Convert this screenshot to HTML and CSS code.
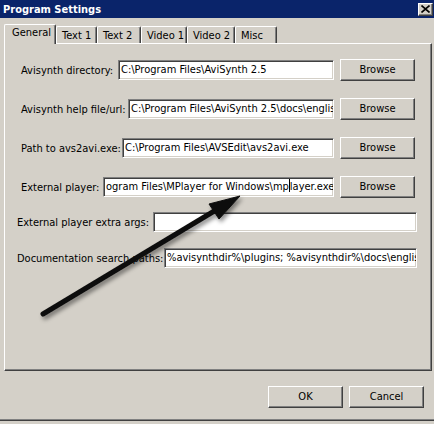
FILE: index.html
```html
<!DOCTYPE html>
<html lang="en">

<head>
    <meta charset="UTF-8">
    <title>Program Settings</title>
    <link rel="stylesheet" href="styles.css">
</head>

<body>
    <div class="window">
        <div class="titlebar">
            <span class="title">Program Settings</span>
            <span class="close">
                <svg width="9" height="8" viewBox="0 0 9 8">
                    <path d="M0.5 0.5 L8.5 7.5 M8.5 0.5 L0.5 7.5" stroke="#000" stroke-width="1.6" />
                </svg>
            </span>
        </div>

        <div class="tabs">
            <div class="tab active tab-general">General</div>
            <div class="tab tab-text1">Text 1</div>
            <div class="tab tab-text2">Text 2</div>
            <div class="tab tab-video1">Video 1</div>
            <div class="tab tab-video2">Video 2</div>
            <div class="tab tab-misc">Misc</div>
        </div>

        <div class="panel">
            <div class="row">
                <span class="label">Avisynth directory:</span>
                <div class="field field-dir">C:\Program Files\AviSynth 2.5</div>
                <div class="btn">Browse</div>
            </div>
            <div class="row">
                <span class="label">Avisynth help file/url:</span>
                <div class="field field-help">C:\Program Files\AviSynth 2.5\docs\english\index.htm</div>
                <div class="btn">Browse</div>
            </div>
            <div class="row">
                <span class="label">Path to avs2avi.exe:</span>
                <div class="field field-avs">C:\Program Files\AVSEdit\avs2avi.exe</div>
                <div class="btn">Browse</div>
            </div>
            <div class="row">
                <span class="label">External player:</span>
                <div class="field field-player">ogram Files\MPlayer for Windows\mp<span class="caret"></span>layer.exe</div>
                <div class="btn">Browse</div>
            </div>
            <div class="row row-wide row-args">
                <span class="label">External player extra args:</span>
                <div class="field field-args"></div>
            </div>
            <div class="row row-wide row-docs">
                <span class="label">Documentation search paths:</span>
                <div class="field field-docs">%avisynthdir%\plugins; %avisynthdir%\docs\english</div>
            </div>
        </div>

        <div class="footer">
            <div class="btn">OK</div>
            <div class="btn">Cancel</div>
        </div>
        <div class="bottom-edge"></div>

        <!-- annotation arrow drawn over the dialog -->
        <svg class="arrow" width="434" height="424" viewBox="0 0 434 424">
            <defs>
                <filter id="shadow" x="-10%" y="-10%" width="130%" height="130%">
                    <feDropShadow dx="2" dy="3" stdDeviation="2" flood-color="#000" flood-opacity="0.45" />
                </filter>
            </defs>
            <g filter="url(#shadow)" fill="#111" stroke="#111">
                <line x1="43" y1="314" x2="216" y2="210" stroke-width="5" stroke-linecap="round" />
                <polygon points="240,196 209,204 219,219" stroke-width="1" stroke-linejoin="round" />
            </g>
        </svg>
    </div>
</body>

</html>
```

FILE: styles.css
```css
body {
    margin: 0;
    background: #d4d0c8;
    font-family: "DejaVu Sans Condensed", "DejaVu Sans", sans-serif;
    font-stretch: semi-condensed;
    font-size: 11px;
    color: #000;
}

.window {
    position: relative;
    width: 434px;
    height: 424px;
    overflow: hidden;
    background: #d4d0c8;
}

.titlebar {
    height: 18px;
    background: #0a246a;
    display: flex;
    justify-content: space-between;
    align-items: center;
    padding: 0 1px 0 3px;
}

.title {
    color: #fff;
    font-weight: bold;
    font-size: 11px;
}

.close {
    width: 15px;
    height: 13px;
    box-sizing: border-box;
    background: #d4d0c8;
    border: 1px solid;
    border-color: #fff #404040 #404040 #fff;
    box-shadow: inset -1px -1px 0 #808080;
    display: flex;
    align-items: center;
    justify-content: center;
}

.tabs {
    display: flex;
    align-items: flex-end;
    height: 25px;
    padding-left: 4px;
    position: relative;
    z-index: 1;
}

.tab {
    box-sizing: border-box;
    height: 17px;
    padding: 2px 0 0 5px;
    border-top: 1px solid #fff;
    border-left: 1px solid #fff;
    border-right: 1px solid #404040;
    box-shadow: inset -1px 0 0 #808080;
    border-radius: 2px 2px 0 0;
    line-height: 13px;
    white-space: nowrap;
}

.tab.active {
    height: 20px;
    margin-bottom: -1px;
    padding: 1px 0 0 7px;
    background: #d4d0c8;
}

.tab-general { width: 52px; }
.tab-text1 { width: 41px; }
.tab-text2 { width: 44px; }
.tab-video1 { width: 46px; }
.tab-video2 { width: 48px; }
.tab-misc { width: 42px; }

.panel {
    box-sizing: border-box;
    width: 428px;
    height: 328px;
    margin-left: 4px;
    border: 1px solid;
    border-color: #fff #404040 #404040 #fff;
    box-shadow: inset -1px -1px 0 #808080;
    padding-top: 15px;
}

.row {
    display: flex;
    align-items: center;
    height: 22px;
    padding: 0 16px 0 16px;
    margin-bottom: 17px;
}

.row-wide {
    padding: 0 14px 0 12px;
}

.row-args {
    margin-top: -4px;
    margin-bottom: 14px;
}

.label {
    flex: 1;
    white-space: nowrap;
}

.field {
    box-sizing: border-box;
    height: 20px;
    background: #fff;
    border: 1px solid;
    border-color: #808080 #fff #fff #808080;
    box-shadow: inset 1px 1px 0 #404040, inset -1px -1px 0 #d4d0c8;
    padding: 0 2px;
    line-height: 18px;
    white-space: nowrap;
    overflow: hidden;
}

.field-dir { width: 216px; }
.field-help { width: 206px; }
.field-avs { width: 212px; }
.field-player { width: 231px; }
.field-args { width: 264px; }
.field-docs { width: 253px; }

.caret {
    display: inline-block;
    width: 1px;
    height: 13px;
    background: #000;
    vertical-align: -2px;
}

.btn {
    box-sizing: border-box;
    width: 75px;
    height: 22px;
    margin-left: 6px;
    border: 1px solid;
    border-color: #fff #404040 #404040 #fff;
    box-shadow: inset -1px -1px 0 #808080;
    text-align: center;
    line-height: 20px;
}

.footer {
    display: flex;
    justify-content: flex-end;
    padding-right: 10px;
    margin-top: 15px;
}

.bottom-edge {
    margin-top: 12px;
    height: 4px;
    border-top: 1px solid #404040;
    box-shadow: 0 -1px 0 #808080;
}

.arrow {
    position: absolute;
    top: 0;
    left: 0;
    pointer-events: none;
}
```
